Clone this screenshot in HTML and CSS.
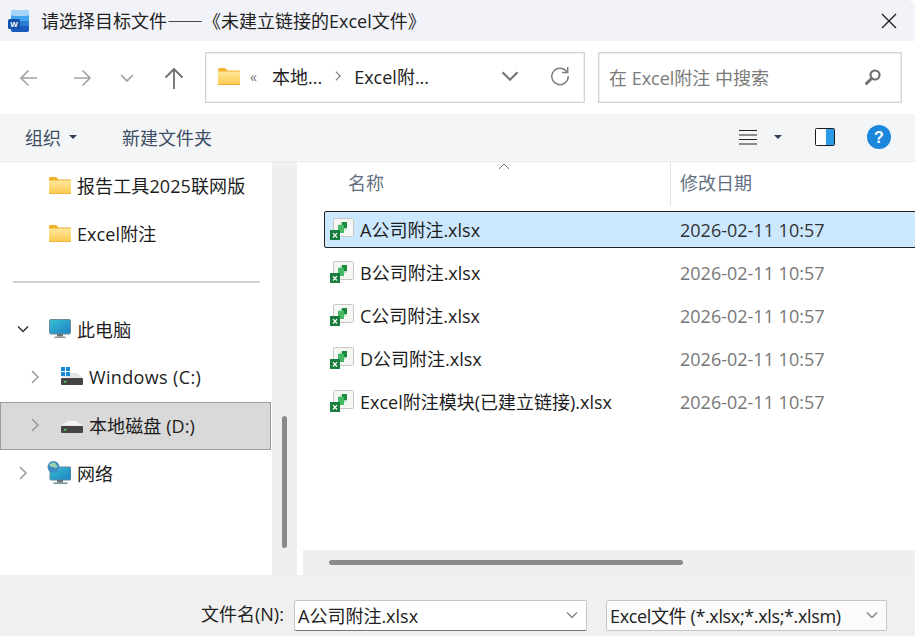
FILE: index.html
```html
<!DOCTYPE html>
<html lang="zh-CN">
<head>
<meta charset="utf-8">
<title>请选择目标文件</title>
<link rel="stylesheet" href="styles.css">
</head>
<body>
<svg class="defs" width="0" height="0" aria-hidden="true">
  <defs>
    <linearGradient id="fold" x1="0" y1="0" x2="0" y2="1"><stop offset="0" stop-color="#ffe89a"/><stop offset="1" stop-color="#fbc94f"/></linearGradient>
    <linearGradient id="screen" x1="0" y1="0" x2="1" y2="1"><stop offset="0" stop-color="#35c3d3"/><stop offset="1" stop-color="#1f7fc4"/></linearGradient>
    <symbol id="folder" viewBox="0 0 22 17">
      <path d="M0 1.5A1.5 1.5 0 0 1 1.500 0H7l2.500 2.500H22V4H0z" fill="#f2b02c"/>
      <path d="M0 3.500h22V17H0z" fill="url(#fold)"/>
      <path d="M0 16h22v1H0z" fill="#eeb23a"/>
    </symbol>
    <symbol id="xl" viewBox="0 0 24 22">
      <path d="M3.500 1.500a1 1 0 0 1 1-1h18a1 1 0 0 1 1 1v16a1 1 0 0 1-1 1h-18a1 1 0 0 1-1-1z" fill="#f6f6f4" stroke="#c8c8c4"/>
      <path d="M8 7l4-3h5v7l-9 5z" fill="#b6e0bd"/>
      <path d="M12 4h5v6h-5z" fill="#1a8a3c"/>
      <path d="M8 7h6v8H8z" fill="#45b866"/>
      <path d="M0 12h10v10H0z" fill="#1a7d40"/>
      <path d="M3 15.200l4 4.300M7 15.200l-4 4.300" stroke="#fff" stroke-width="1.200"/>
    </symbol>
    <symbol id="arrow" viewBox="0 0 18 18">
      <path d="M1 9h16M8.500 1.500L1 9l7.500 7.500" fill="none" stroke="currentColor" stroke-width="1.600"/>
    </symbol>
    <symbol id="chev" viewBox="0 0 12 12">
      <path d="M1 3.500l5 5 5-5" fill="none" stroke="currentColor" stroke-width="1.500"/>
    </symbol>
    <symbol id="chevr" viewBox="0 0 8 14">
      <path d="M1 1l6 6-6 6" fill="none" stroke="currentColor" stroke-width="1.500"/>
    </symbol>
  </defs>
</svg>
<div class="dialog">
  <header class="titlebar">
    <svg class="word" width="22" height="22" viewBox="0 0 22 22"><rect x="3" y="0" width="18" height="22" rx="2.500" fill="#41a5ee"/><rect x="3" y="0" width="18" height="6" rx="2" fill="#a5d4f7"/><rect x="3" y="11" width="18" height="6" fill="#2b7cd3"/><path d="M3 16h18v3.500a2.500 2.500 0 0 1-2.500 2.500h-13A2.500 2.500 0 0 1 3 19.500z" fill="#185abd"/><rect x="0" y="9" width="12" height="10" rx="1.500" fill="#1450aa"/><text x="6" y="17" class="word-w">W</text></svg>
    <span class="title-text">请选择目标文件<span class="cjk">——《</span>未建立链接的Excel文件》</span>
    <svg class="close" width="16" height="16" viewBox="0 0 16 16"><path d="M1 1l14 14M15 1L1 15" stroke="#1a1a1a" stroke-width="1.300" fill="none"/></svg>
  </header>
  <div class="addressbar">
    <svg class="nav-back" width="18" height="18"><use href="#arrow"/></svg>
    <svg class="nav-fwd" width="18" height="18"><use href="#arrow"/></svg>
    <svg class="nav-down" width="14" height="14"><use href="#chev"/></svg>
    <svg class="nav-up" width="20" height="22" viewBox="0 0 20 22"><path d="M10 22V2M1.500 10.500L10 2l8.500 8.500" fill="none" stroke="#6e6e6e" stroke-width="1.800"/></svg>
    <div class="path-box">
      <svg class="path-folder" width="22" height="17"><use href="#folder"/></svg>
      <span class="path-more">«</span>
      <span class="path-seg">本地...</span>
      <svg class="path-sep" width="6" height="10"><use href="#chevr"/></svg>
      <span class="path-seg path-seg-last">Excel附...</span>
      <svg class="path-drop" width="18" height="18"><use href="#chev"/></svg>
      <svg class="path-refresh" width="20" height="20" viewBox="0 0 22 22"><path d="M18.500 6.500A9 9 0 1 0 20 11" fill="none" stroke="#7b7b7b" stroke-width="1.600"/><path d="M19.500 1v6.200h-6.200" fill="none" stroke="#7b7b7b" stroke-width="1.600"/></svg>
    </div>
    <div class="search-box">
      <span class="search-text">在 Excel附注 中搜索</span>
      <svg width="18" height="18" viewBox="0 0 18 18"><circle cx="11" cy="7" r="4.500" fill="none" stroke="#6f6f6f" stroke-width="2.200"/><path d="M7.500 10.500L2.500 15.500" stroke="#6f6f6f" stroke-width="3" stroke-linecap="round"/></svg>
    </div>
  </div>
  <div class="toolbar">
    <span class="tool-text">组织</span>
    <span class="caret caret-org"></span>
    <span class="tool-text tool-new">新建文件夹</span>
    <svg class="tool-list" width="18" height="16" viewBox="0 0 18 16"><path d="M0 1.500h18M0 6h18M0 10.500h18M0 15h18" stroke="#222" stroke-width="1"/></svg>
    <span class="caret caret-view"></span>
    <svg class="tool-pane" width="20" height="18" viewBox="0 0 20 18"><rect x=".5" y=".5" width="19" height="17" rx="1" fill="#fff" stroke="#1a1a1a"/><rect x="11" y="1" width="8" height="16" fill="#2a9be8"/></svg>
    <svg class="tool-help" width="24" height="24" viewBox="0 0 24 24"><circle cx="12" cy="12" r="12" fill="#1a87dd"/><text x="12" y="18" class="help-q">?</text></svg>
  </div>
  <main class="main">
    <nav class="tree">
      <div class="tree-row row-plain"><svg class="tree-icon" width="22" height="17"><use href="#folder"/></svg><span>报告工具2025联网版</span></div>
      <div class="tree-row row-plain"><svg class="tree-icon" width="22" height="17"><use href="#folder"/></svg><span>Excel附注</span></div>
      <div class="tree-sep"><hr></div>
      <div class="tree-row row-l1">
        <svg class="chev-down" width="12" height="12"><use href="#chev"/></svg>
        <svg class="tree-icon" width="22" height="20" viewBox="0 0 22 20"><rect x=".5" y=".5" width="21" height="14.500" rx="1.500" fill="url(#screen)" stroke="#6a8a96"/><path d="M8 15h6v2.500H8z" fill="#6a7478"/><path d="M5.500 17.500h11v1.500h-11z" fill="#8a9296"/></svg>
        <span>此电脑</span>
      </div>
      <div class="tree-row row-l2">
        <svg class="chev-right" width="8" height="14"><use href="#chevr"/></svg>
        <svg class="drive-icon" width="22" height="20" viewBox="0 0 22 20"><path d="M0 10L10 6h6l6 5z" fill="#e2e2e2"/><rect y="11" width="22" height="7" rx="1" fill="#444"/><rect x="3" y="14" width="2.500" height="1.500" fill="#55d66b"/><path d="M0 0h4v4H0zM5 0h4v4H5zM0 5h4v4H0zM5 5h4v4H5z" fill="#1789d6"/></svg>
        <span class="wide-latin">Windows (C:)</span>
      </div>
      <div class="tree-row row-l2 row-selected">
        <svg class="chev-right" width="8" height="14"><use href="#chevr"/></svg>
        <svg class="drive-icon" width="22" height="20" viewBox="0 0 22 20"><path d="M0 10L8 6h7l7 5z" fill="#f2f2f2"/><rect y="11" width="22" height="7" rx="1" fill="#444"/><rect x="3" y="14" width="2.500" height="1.500" fill="#55d66b"/></svg>
        <span>本地磁盘 (D:)</span>
      </div>
      <div class="tree-row row-l1b">
        <svg class="chev-right" width="8" height="14"><use href="#chevr"/></svg>
        <svg class="tree-icon" width="24" height="24" viewBox="0 0 24 24"><rect x="3" y="6" width="21" height="13" rx="1" fill="url(#screen)" stroke="#5d8796"/><path d="M10 19h6v2.500h-6z" fill="#6a7478"/><path d="M6.500 21.500h14V23h-14z" fill="#6f8f9a"/><circle cx="6.500" cy="6" r="6" fill="#3f8fc4"/><path d="M2 3.500c2-1 3-2 5-2s1 2 3 3-1 3-3 2-3 0-5-3z" fill="#9fd0a8"/></svg>
        <span>网络</span>
      </div>
    </nav>
    <div class="vscroll"><div class="vthumb"></div></div>
    <section class="files">
      <div class="file-head">
        <div class="col-name">名称<svg class="sort" width="12" height="7" viewBox="0 0 12 7"><path d="M1 6l5-5 5 5" fill="none" stroke="#777" stroke-width="1"/></svg></div>
        <div class="col-date">修改日期</div>
      </div>
      <div class="file-list">
        <div class="file-row file-selected"><svg width="24" height="22"><use href="#xl"/></svg><span class="fname">A公司附注.xlsx</span><span class="fdate">2026-02-11 10:57</span></div>
        <div class="file-row"><svg width="24" height="22"><use href="#xl"/></svg><span class="fname">B公司附注.xlsx</span><span class="fdate">2026-02-11 10:57</span></div>
        <div class="file-row"><svg width="24" height="22"><use href="#xl"/></svg><span class="fname">C公司附注.xlsx</span><span class="fdate">2026-02-11 10:57</span></div>
        <div class="file-row"><svg width="24" height="22"><use href="#xl"/></svg><span class="fname">D公司附注.xlsx</span><span class="fdate">2026-02-11 10:57</span></div>
        <div class="file-row"><svg width="24" height="22"><use href="#xl"/></svg><span class="fname">Excel附注模块(已建立链接).xlsx</span><span class="fdate">2026-02-11 10:57</span></div>
      </div>
      <div class="hscroll"><div class="hthumb"></div></div>
    </section>
  </main>
  <footer class="footer">
    <span class="fn-label">文件名(N):</span>
    <div class="fn-input"><span>A公司附注.xlsx</span><svg width="12" height="12"><use href="#chev"/></svg></div>
    <div class="fn-type"><span class="fn-type-text">Excel文件 (*.xlsx;*.xls;*.xlsm)</span><svg width="12" height="12"><use href="#chev"/></svg></div>
  </footer>
</div>
</body>
</html>
```

FILE: styles.css
```css
* { box-sizing: border-box; }
html, body { margin: 0; padding: 0; width: 915px; height: 636px; overflow: hidden; background: #fff; }
body { font-family: "Open Sans", "Noto Sans CJK SC", sans-serif; font-size: 18px; color: #1c1c1c; }
.defs { position: absolute; }
svg { display: block; flex: none; }
.dialog { width: 915px; height: 636px; display: flex; flex-direction: column; }
.cjk { font-family: "Noto Sans CJK SC", sans-serif; }

.titlebar { height: 41px; background: #f1f3f8; display: flex; align-items: center; padding: 0 18px 0 8px; border-top-right-radius: 8px; flex: none; }
.word { margin-right: 11px; }
.word-w { font: 700 8px "Liberation Sans", sans-serif; fill: #fff; text-anchor: middle; }
.title-text { flex: 1; white-space: nowrap; color: #222; line-height: 39px; }

.addressbar { height: 73px; background: #fff; display: flex; align-items: center; padding-left: 20px; flex: none; }
.nav-back { color: #a3a3a3; }
.nav-fwd { color: #a3a3a3; margin-left: 35px; transform: scaleX(-1); }
.nav-down { color: #a8a8a8; margin-left: 29px; }
.nav-up { margin-left: 30px; }
.path-box { width: 380px; height: 51px; margin-left: 21px; border: 1px solid #d4d4d4; box-shadow: inset 0 0 0 .5px #e0e0e0; display: flex; align-items: center; padding: 0 0 3px 12px; }
.path-more { color: #777; font-size: 14px; margin-left: 10px; width: 22px; }
.path-seg { color: #222; white-space: nowrap; }
.path-sep { color: #777; margin: 0 13px 0 13px; }
.path-seg-last { width: 142px; }
.path-drop { color: #777; margin-left: 5px; }
.path-refresh { margin-left: 31px; }
.search-box { width: 304px; height: 51px; margin-left: 13px; border: 1px solid #d4d4d4; box-shadow: inset 0 0 0 .5px #e0e0e0; display: flex; align-items: center; justify-content: space-between; padding: 0 19px 2px 10px; }
.search-text { color: #7a7a7a; white-space: nowrap; }

.toolbar { height: 47px; background: #f4f5f7; display: flex; align-items: center; padding: 0 0 2px 25px; flex: none; }
.tool-text { color: #3d4d63; white-space: nowrap; }
.caret { width: 0; height: 0; border-left: 4px solid transparent; border-right: 4px solid transparent; border-top: 4px solid #2e3f58; }
.caret-org { margin-left: 8px; }
.tool-new { margin-left: 45px; }
.tool-list { margin-left: auto; }
.caret-view { margin-left: 17px; }
.tool-pane { margin-left: 33px; }
.tool-help { margin: 0 24px 0 32px; }
.help-q { font: 700 16px "Liberation Sans", sans-serif; fill: #fff; text-anchor: middle; }

.main { height: 414px; display: flex; flex: none; background: #fff; border-top: 1px solid #ebebeb; }
.tree { width: 272px; flex: none; letter-spacing: .1px; }
.tree-row { height: 48px; display: flex; align-items: center; white-space: nowrap; color: #1c1c1c; padding-bottom: 2px; }
.row-plain { padding-left: 49px; }
.row-plain .tree-icon { margin-right: 6px; }
.row-l1 { padding-left: 17px; }
.chev-down { color: #333; margin-right: 20px; }
.row-l1 .tree-icon { margin-right: 6px; }
.row-l2 { padding-left: 31px; }
.chev-right { color: #999; margin-right: 22px; }
.drive-icon { margin-right: 6px; }
.wide-latin { letter-spacing: .35px; }
.row-selected { background: #d9d9d9; border: 1px solid #9c9c9c; padding-left: 30px; margin-right: 1px; }
.row-l1b { padding-left: 19px; }
.row-l1b .chev-right { margin-right: 20px; }
.row-l1b .tree-icon { margin-right: 6px; }
.tree-sep { height: 48px; display: flex; align-items: center; padding: 0 12px 0 13px; }
.tree-sep hr { width: 100%; height: 2px; margin: 0; border: 0; background: #d2d2d2; }

.vscroll { width: 25px; flex: none; background: #efefef; padding: 254px 0 0 10px; }
.vthumb { width: 5px; height: 132px; border-radius: 3px; background: #8a8a8a; }

.files { width: 612px; margin-left: 6px; flex: none; display: flex; flex-direction: column; overflow: hidden; }
.file-head { height: 44px; display: flex; flex: none; color: #61707f; }
.col-name { width: 368px; padding: 9px 0 0 45px; border-right: 1px solid #e5e5e5; line-height: 24px; position: relative; }
.sort { position: absolute; left: 195px; top: 1px; }
.col-date { padding: 9px 0 0 9px; line-height: 24px; }
.file-list { flex: 1; padding-top: 5px; display: flex; flex-direction: column; gap: 6px; margin-left: 21px; }
.file-row { height: 37px; display: flex; align-items: center; padding: 0 0 1px 5px; color: #1c1c1c; white-space: nowrap; border: 1px solid transparent; margin-right: -2px; }
.file-selected { background: #cce8ff; border-color: #222; border-radius: 2px 0 0 2px; }
.fname { margin-left: 6px; width: 320px; }
.fdate { color: #777; margin-top: 2px; }
.file-selected .fdate { color: #333; }
.hscroll { height: 25px; background: #efefef; flex: none; padding: 10px 0 0 26px; }
.hthumb { width: 354px; height: 5px; border-radius: 3px; background: #8a8a8a; }

.footer { height: 61px; background: #f0f0f0; display: flex; align-items: flex-start; padding: 25px 0 0 201px; flex: none; }
.fn-label { line-height: 29px; white-space: nowrap; color: #222; width: 93px; }
.fn-input, .fn-type { height: 31px; display: flex; align-items: center; justify-content: space-between; background: #fff; white-space: nowrap; color: #222; border: 1px solid #c6c6c6; border-radius: 2px; padding-bottom: 2px; }
.fn-input { width: 293px; padding-left: 3px; padding-right: 8px; border-bottom-color: #777; }
.fn-type { width: 281px; margin-left: 19px; padding-left: 3px; padding-right: 8px; background: #fbfbfb; }
.fn-type-text { letter-spacing: -.36px; }
.fn-input svg, .fn-type svg { color: #888; }
```
